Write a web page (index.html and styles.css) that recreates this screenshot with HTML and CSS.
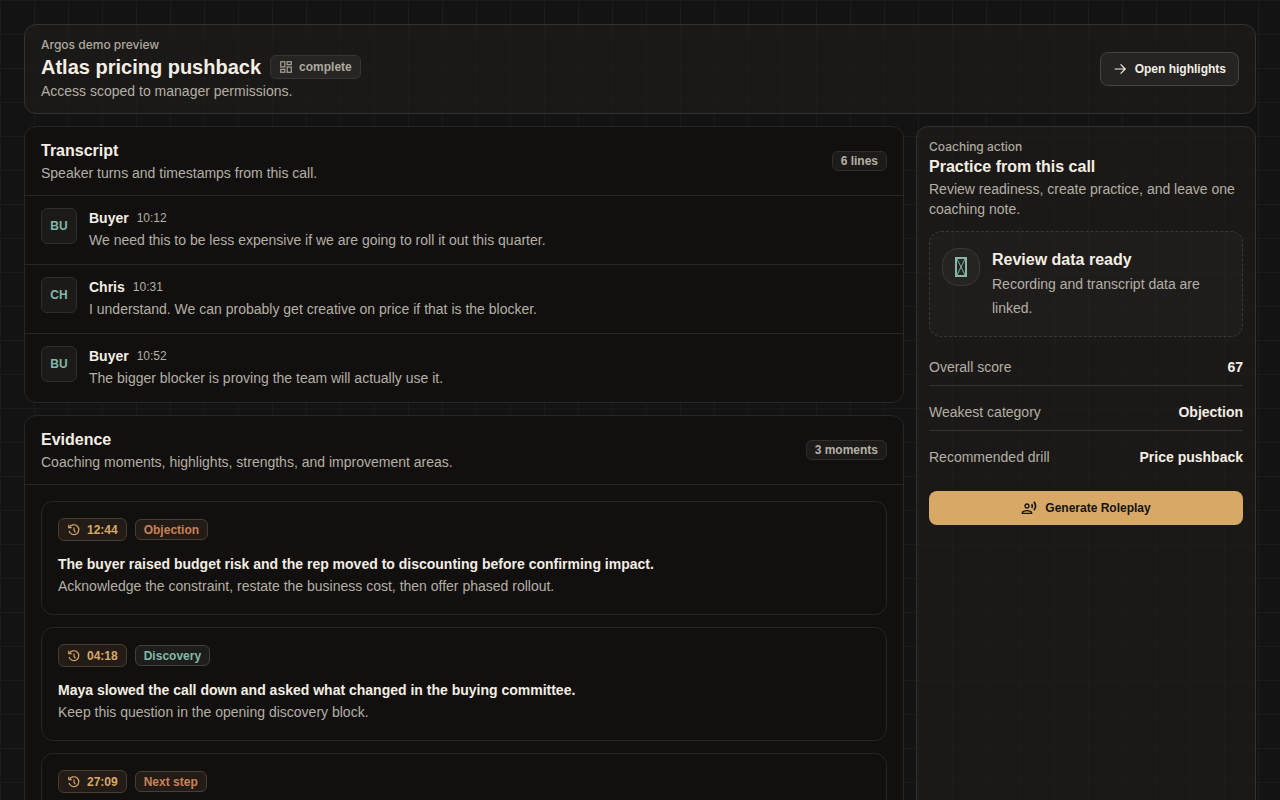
FILE: index.html
```
<!DOCTYPE html>
<html lang="en">
<head>
    <meta charset="UTF-8">
    <meta name="viewport" content="width=device-width, initial-scale=1.0">
    <title>Atlas pricing pushback</title>
    <link rel="stylesheet" href="styles.css">
</head>
<body>
    <svg class="sprite" aria-hidden="true">
        <symbol id="icon-history" viewBox="0 0 24 24">
            <path d="M3 3v5h5" />
            <path d="M4 8a8.500 8.500 0 1 1-.5 5.500" />
            <path d="M12 7.500v5l2.500 3.500" />
        </symbol>
    </svg>
    <div class="page">
        <header class="page-header">
            <div>
                <p class="eyebrow">Argos demo preview</p>
                <div class="title-row">
                    <h1>Atlas pricing pushback</h1>
                    <span class="status">
                        <svg class="icon" viewBox="0 0 24 24" aria-hidden="true">
                            <rect x="3" y="3" width="7" height="9" />
                            <rect x="14" y="3" width="7" height="5" />
                            <rect x="14" y="12" width="7" height="9" />
                            <rect x="3" y="16" width="7" height="5" />
                        </svg>
                        complete
                    </span>
                </div>
                <p class="muted">Access scoped to manager permissions.</p>
            </div>
            <button type="button" class="btn btn-outline">
                <svg class="icon" viewBox="0 0 24 24" aria-hidden="true">
                    <path d="M3 12h18M13 4l8 8-8 8" />
                </svg>
                Open highlights
            </button>
        </header>

        <main class="columns">
            <div class="main-column">
                <section class="panel">
                    <div class="panel-head">
                        <div>
                            <h2>Transcript</h2>
                            <p class="muted">Speaker turns and timestamps from this call.</p>
                        </div>
                        <span class="count">6 lines</span>
                    </div>
                    <article class="turn">
                        <span class="avatar">BU</span>
                        <div>
                            <div class="turn-meta"><strong>Buyer</strong><time>10:12</time></div>
                            <p>We need this to be less expensive if we are going to roll it out this quarter.</p>
                        </div>
                    </article>
                    <article class="turn">
                        <span class="avatar">CH</span>
                        <div>
                            <div class="turn-meta"><strong>Chris</strong><time>10:31</time></div>
                            <p>I understand. We can probably get creative on price if that is the blocker.</p>
                        </div>
                    </article>
                    <article class="turn">
                        <span class="avatar">BU</span>
                        <div>
                            <div class="turn-meta"><strong>Buyer</strong><time>10:52</time></div>
                            <p>The bigger blocker is proving the team will actually use it.</p>
                        </div>
                    </article>
                </section>

                <section class="panel">
                    <div class="panel-head">
                        <div>
                            <h2>Evidence</h2>
                            <p class="muted">Coaching moments, highlights, strengths, and improvement areas.</p>
                        </div>
                        <span class="count">3 moments</span>
                    </div>
                    <div class="moments">
                        <article class="moment">
                            <div class="tags">
                                <span class="stamp"><svg class="icon" aria-hidden="true"><use href="#icon-history" /></svg>12:44</span>
                                <span class="tag tag-warn">Objection</span>
                            </div>
                            <h3>The buyer raised budget risk and the rep moved to discounting before confirming impact.</h3>
                            <p>Acknowledge the constraint, restate the business cost, then offer phased rollout.</p>
                        </article>
                        <article class="moment">
                            <div class="tags">
                                <span class="stamp"><svg class="icon" aria-hidden="true"><use href="#icon-history" /></svg>04:18</span>
                                <span class="tag tag-good">Discovery</span>
                            </div>
                            <h3>Maya slowed the call down and asked what changed in the buying committee.</h3>
                            <p>Keep this question in the opening discovery block.</p>
                        </article>
                        <article class="moment">
                            <div class="tags">
                                <span class="stamp"><svg class="icon" aria-hidden="true"><use href="#icon-history" /></svg>27:09</span>
                                <span class="tag tag-warn">Next step</span>
                            </div>
                        </article>
                    </div>
                </section>
            </div>

            <aside class="coaching">
                <div>
                    <p class="eyebrow">Coaching action</p>
                    <h2>Practice from this call</h2>
                    <p class="muted">Review readiness, create practice, and leave one coaching note.</p>
                </div>
                <div class="notice">
                    <span class="notice-icon">
                        <svg viewBox="0 0 12 20" aria-hidden="true">
                            <path class="frame" d="M1 1h10v18H1z" />
                            <path d="M2 2l8 16M10 2L2 18" />
                        </svg>
                    </span>
                    <div>
                        <h3>Review data ready</h3>
                        <p>Recording and transcript data are linked.</p>
                    </div>
                </div>
                <dl class="facts">
                    <div><dt>Overall score</dt><dd>67</dd></div>
                    <div><dt>Weakest category</dt><dd>Objection</dd></div>
                    <div><dt>Recommended drill</dt><dd>Price pushback</dd></div>
                </dl>
                <button type="button" class="btn btn-primary">
                    <svg class="icon-voice" viewBox="0 0 24 24" aria-hidden="true">
                        <path d="M9 13c2.210 0 4-1.790 4-4s-1.790-4-4-4-4 1.790-4 4 1.790 4 4 4zm0-6c1.100 0 2 .9 2 2s-.9 2-2 2-2-.9-2-2 .9-2 2-2zm0 8c-2.670 0-8 1.340-8 4v2h16v-2c0-2.660-5.330-4-8-4zm-6 4c.22-.72 3.310-2 6-2 2.700 0 5.800 1.290 6 2H3z" />
                        <path d="M15.080 7.050c.84 1.180.84 2.710 0 3.890l1.680 1.690c2.020-2.020 2.020-5.070 0-7.270l-1.680 1.690zM20.070 2l-1.630 1.630c2.770 3.020 2.770 7.560 0 10.740L20.070 16c3.900-3.890 3.910-9.950 0-14z" />
                    </svg>
                    Generate Roleplay
                </button>
            </aside>
        </main>
    </div>
</body>
</html>
```
FILE: styles.css
```
* {
    box-sizing: border-box;
}

body {
    margin: 0;
    min-height: 100vh;
    font-family: "Liberation Sans", Arial, sans-serif;
    font-size: 14px;
    line-height: 20px;
    color: #f4eee4;
    background-color: #131313;
    background-image:
        linear-gradient(to right, #1b1b1a 1px, transparent 1px),
        linear-gradient(to bottom, #1b1b1a 1px, transparent 1px);
    background-size: 34px 34px;
}

h1, h2, h3, p, dl, dd {
    margin: 0;
}

h1, h2, h3 {
    font-weight: 600;
}

h1 {
    font-size: 20px;
    line-height: 28px;
}

h2 {
    font-size: 16px;
    line-height: 24px;
}

.sprite {
    display: none;
}

.icon {
    width: 14px;
    height: 14px;
    flex: none;
    fill: none;
    stroke: currentColor;
    stroke-width: 2;
}

.page {
    padding: 24px;
    display: grid;
    gap: 12px;
}

.page-header, .coaching {
    border: 1px solid #34312e;
    border-radius: 12px;
    background: rgba(34, 30, 26, 0.6);
}

.page-header {
    display: flex;
    align-items: center;
    justify-content: space-between;
    padding: 12px 16px;
}

.eyebrow {
    font-family: Inter, sans-serif;
    font-size: 12px;
    line-height: 16px;
    font-weight: 500;
    color: #aea99f;
}

.muted {
    color: #b4afa5;
}

.title-row {
    display: flex;
    align-items: center;
    gap: 9px;
}

.status, .count, .stamp, .tag {
    display: inline-flex;
    align-items: center;
    font-size: 12px;
    line-height: 16px;
    font-weight: 600;
    border: 1px solid #373431;
    border-radius: 6px;
    white-space: nowrap;
}

.status {
    gap: 6px;
    padding: 3px 8px;
    color: #aea99f;
    background: #262523;
}

.count {
    padding: 1px 8px;
    color: #b5b0a6;
    background: #1c1b1a;
    border-color: #302e2b;
}

.btn {
    display: inline-flex;
    align-items: center;
    justify-content: center;
    gap: 8px;
    height: 34px;
    padding: 0 12px;
    border: 1px solid transparent;
    border-radius: 8px;
    font-family: inherit;
    font-size: 12px;
    font-weight: 600;
    cursor: pointer;
}

.btn-outline {
    color: #f4eee4;
    background: #252422;
    border-color: #46423c;
}

.btn-primary {
    color: #141312;
    background: #d7a866;
}

.icon-voice {
    width: 16px;
    height: 16px;
    fill: currentColor;
}

.columns {
    display: grid;
    grid-template-columns: minmax(0, 1fr) 340px;
    gap: 12px;
}

.main-column {
    display: flex;
    flex-direction: column;
    gap: 12px;
}

.panel {
    border: 1px solid #292725;
    border-radius: 12px;
    background: #11100e;
}

.panel-head {
    display: flex;
    align-items: center;
    justify-content: space-between;
    padding: 12px 16px;
    border-bottom: 1px solid #292725;
}

.turn {
    display: flex;
    gap: 12px;
    padding: 12px 16px;
}

.turn + .turn {
    border-top: 1px solid #292725;
}

.turn p {
    line-height: 24px;
    color: #b4afa5;
}

.avatar {
    display: grid;
    place-items: center;
    width: 36px;
    height: 36px;
    border: 1px solid #302e2b;
    border-radius: 6px;
    background: #1b1a18;
    color: #82b9a9;
    font-size: 12px;
    font-weight: 600;
}

.turn-meta {
    display: flex;
    gap: 8px;
}

.turn-meta strong {
    font-weight: 600;
}

.turn-meta time {
    font-size: 12px;
    color: #b4afa5;
}

.moments {
    display: grid;
    gap: 12px;
    padding: 16px;
}

.moment {
    padding: 16px;
    border: 1px solid #272523;
    border-radius: 12px;
    line-height: 23px;
}

.moment h3 {
    font-size: 14px;
    line-height: 22px;
}

.moment p {
    color: #b4afa5;
}

.tags {
    display: flex;
    align-items: center;
    gap: 8px;
    margin-bottom: 12px;
}

.stamp {
    gap: 6px;
    height: 23px;
    padding: 0 8px;
    color: #d7a866;
    background: #231c16;
    border-color: #463c31;
}

.tag {
    height: 21px;
    padding: 0 8px;
    border-color: #463f38;
}

.tag-warn {
    color: #c98158;
    background: #231c16;
}

.tag-good {
    color: #82b9a9;
    background: #1d1d1b;
}

.coaching {
    padding: 12px;
}

.notice {
    display: flex;
    gap: 12px;
    margin: 12px 0;
    padding: 16px 12px;
    border: 1px dashed #3a3834;
    border-radius: 12px;
    background: rgba(255, 255, 255, 0.02);
}

.notice-icon {
    display: grid;
    place-items: center;
    flex: none;
    width: 38px;
    height: 38px;
    border: 1px solid #3a3834;
    border-radius: 16px;
    background: #252422;
}

.notice-icon svg {
    width: 12px;
    height: 20px;
    fill: none;
    stroke: #82b9a9;
}

.notice-icon .frame {
    stroke-width: 2;
}

.notice h3 {
    font-size: 16px;
    line-height: 24px;
}

.notice p {
    line-height: 24px;
    color: #b4afa5;
}

.facts {
    display: grid;
    gap: 8px;
    margin-bottom: 16px;
}

.facts div {
    display: flex;
    justify-content: space-between;
    padding: 8px 0;
}

.facts div:not(:last-child) {
    border-bottom: 1px solid #353330;
}

.facts dt {
    color: #b4afa5;
}

.facts dd {
    font-weight: 600;
}

.coaching .btn {
    width: 100%;
}
```
